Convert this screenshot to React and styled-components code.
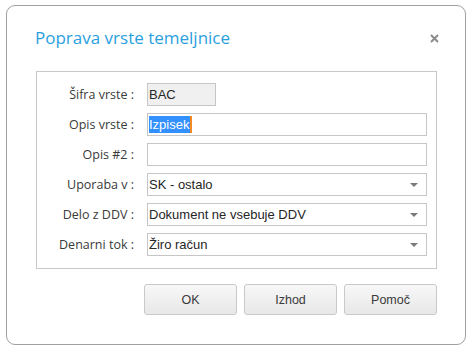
import React from "react";
import styled, { createGlobalStyle } from "styled-components";

const GlobalStyle = createGlobalStyle`
  html, body {
    margin: 0;
    padding: 0;
    background: #ffffff;
  }
`;

// Okno dialoga
const Dialog = styled.div`
  box-sizing: border-box;
  width: 460px;
  height: 340px;
  margin: 5px 0 0 6px;
  border: 1px solid #a0a0a0;
  border-radius: 9px;
  background: #ffffff;
  display: flex;
  flex-direction: column;
`;

const Header = styled.div`
  display: flex;
  align-items: center;
  justify-content: space-between;
  height: 24px;
  margin: 20px 0 21px;
  padding: 0 26px 0 28px;
`;

const Title = styled.h1`
  margin: 0;
  font-family: "Open Sans", sans-serif;
  font-weight: 400;
  font-size: 17px;
  line-height: 24px;
  color: #2a9fe0;
`;

const Close = styled.button`
  border: 0;
  padding: 0;
  background: none;
  width: 9px;
  height: 9px;
  display: flex;
`;

const Fieldset = styled.div`
  box-sizing: border-box;
  width: 401px;
  margin-left: 29px;
  padding: 11px 9px 12px 0;
  border: 1px solid #c8c8c8;
  display: grid;
  grid-template-columns: 97px 280px;
  column-gap: 13px;
  row-gap: 7px;
`;

const Label = styled.label`
  font-family: "Open Sans", sans-serif;
  font-size: 12.5px;
  color: #3a3a3a;
  text-align: right;
  line-height: 23px;
  white-space: pre;
`;

const Field = styled.div`
  box-sizing: border-box;
  height: 23px;
  width: ${(p) => (p.$narrow ? "69px" : "280px")};
  border: 1px solid #c6c6c6;
  background: ${(p) => (p.$disabled ? "#f0f0f0" : "#ffffff")};
  display: flex;
  align-items: center;
  padding: 0 0 0 1px;
  font-family: "Liberation Sans", sans-serif;
  font-size: 13px;
  color: #262626;
`;

const Selected = styled.span`
  background: #3390ff;
  color: #ffffff;
  line-height: 17px;
  padding-right: 1px;
  border-right: 2px solid #f08a24;
`;

const SelectText = styled.span`
  flex: 1;
`;

const Arrow = styled.span`
  width: 0;
  height: 0;
  margin-right: 8px;
  border-left: 4px solid transparent;
  border-right: 4px solid transparent;
  border-top: 4px solid #7a7a7a;
`;

const Buttons = styled.div`
  display: flex;
  justify-content: flex-end;
  gap: 7px;
  margin: 15px 28px 0 0;
`;

const Button = styled.button`
  box-sizing: border-box;
  width: 93px;
  height: 31px;
  border: 1px solid #c9c9c9;
  border-radius: 3px;
  background: linear-gradient(#f7f7f7, #e8e8e8);
  font-family: "Liberation Sans", sans-serif;
  font-size: 12.5px;
  color: #3a3a3a;
  padding: 0;
`;

const rows = [
  { label: "Šifra vrste :", value: "BAC", narrow: true, disabled: true },
  { label: "Opis vrste :", value: "Izpisek", selected: true },
  { label: "Opis #2 :", value: "" },
  { label: "Uporaba v :", value: "SK - ostalo", select: true },
  { label: "Delo z DDV :", value: "Dokument ne vsebuje DDV", select: true },
  { label: "Denarni tok :", value: "Žiro račun", select: true },
];

export default function App() {
  return (
    <>
      <GlobalStyle />
      <Dialog>
        <Header>
          <Title>Poprava vrste temeljnice</Title>
          <Close aria-label="Zapri">
            <svg width="9" height="9" viewBox="0 0 9 9">
              <path d="M1 1 L8 8 M8 1 L1 8" stroke="#8c8c8c" strokeWidth="2" />
            </svg>
          </Close>
        </Header>
        <Fieldset>
          {rows.map((r) => (
            <React.Fragment key={r.label}>
              <Label>{r.label}</Label>
              <Field $narrow={r.narrow} $disabled={r.disabled}>
                {r.selected ? (
                  <Selected>{r.value}</Selected>
                ) : (
                  <SelectText>{r.value}</SelectText>
                )}
                {r.select && <Arrow />}
              </Field>
            </React.Fragment>
          ))}
        </Fieldset>
        <Buttons>
          <Button>OK</Button>
          <Button>Izhod</Button>
          <Button>Pomoč</Button>
        </Buttons>
      </Dialog>
    </>
  );
}
